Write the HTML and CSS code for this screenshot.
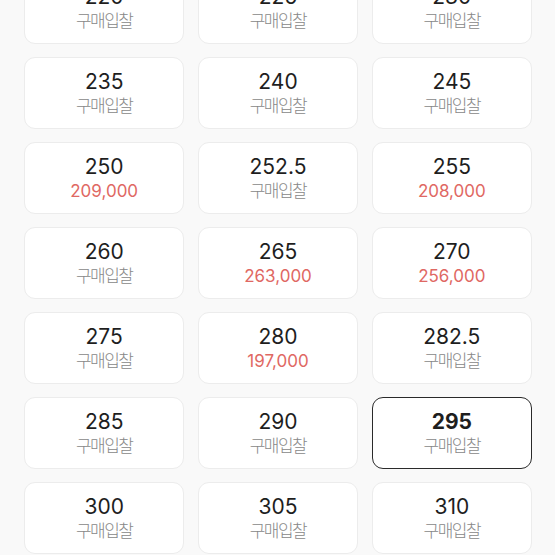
FILE: index.html
```html
<!DOCTYPE html>
<html>
  <head>
    <title>사이즈 선택</title>
    <link rel="stylesheet" href="styles.css">
  </head>

  <body>
    <div class="size-grid">
      <div class="size-card"><div class="size">220</div><div class="price">구매입찰</div></div>
      <div class="size-card"><div class="size">225</div><div class="price">구매입찰</div></div>
      <div class="size-card"><div class="size">230</div><div class="price">구매입찰</div></div>

      <div class="size-card"><div class="size">235</div><div class="price">구매입찰</div></div>
      <div class="size-card"><div class="size">240</div><div class="price">구매입찰</div></div>
      <div class="size-card"><div class="size">245</div><div class="price">구매입찰</div></div>

      <div class="size-card"><div class="size">250</div><div class="price has-bid">209,000</div></div>
      <div class="size-card"><div class="size">252.5</div><div class="price">구매입찰</div></div>
      <div class="size-card"><div class="size">255</div><div class="price has-bid">208,000</div></div>

      <div class="size-card"><div class="size">260</div><div class="price">구매입찰</div></div>
      <div class="size-card"><div class="size">265</div><div class="price has-bid">263,000</div></div>
      <div class="size-card"><div class="size">270</div><div class="price has-bid">256,000</div></div>

      <div class="size-card"><div class="size">275</div><div class="price">구매입찰</div></div>
      <div class="size-card"><div class="size">280</div><div class="price has-bid">197,000</div></div>
      <div class="size-card"><div class="size">282.5</div><div class="price">구매입찰</div></div>

      <div class="size-card"><div class="size">285</div><div class="price">구매입찰</div></div>
      <div class="size-card"><div class="size">290</div><div class="price">구매입찰</div></div>
      <div class="size-card selected"><div class="size">295</div><div class="price">구매입찰</div></div>

      <div class="size-card"><div class="size">300</div><div class="price">구매입찰</div></div>
      <div class="size-card"><div class="size">305</div><div class="price">구매입찰</div></div>
      <div class="size-card"><div class="size">310</div><div class="price">구매입찰</div></div>
    </div>
  </body>
</html>
```

FILE: styles.css
```css
body {
  margin: 0;
  background-color: #f9f9f9;
  font-family: Inter, "Noto Sans CJK KR", sans-serif;
  overflow: hidden;
}

/* list is scrolled a bit, first row cut off at the top */
.size-grid {
  display: grid;
  grid-template-columns: repeat(3, 1fr);
  column-gap: 13.5px;
  row-gap: 13.5px;
  padding: 0 23px 0 24px;
  margin-top: -28px;
}

.size-card {
  height: 71.5px;
  box-sizing: border-box;
  padding-top: 11px;
  display: flex;
  flex-direction: column;
  align-items: center;
  background-color: white;
  border: 1px solid #ececec;
  border-radius: 11px;
}

.size {
  font-size: 21px;
  line-height: 25px;
  color: #1e1e1e;
}

.price {
  margin-top: 1px;
  font-size: 17px;
  font-weight: 300;
  line-height: 22px;
  color: #888888;
  letter-spacing: -1.5px;
}

.price.has-bid {
  margin-top: 2px;
  font-weight: normal;
  line-height: 21px;
  color: #df6863;
  letter-spacing: 0;
}

.size-card.selected {
  padding-top: 10.5px;
  border: 1.5px solid #2a2a2a;
}

.size-card.selected .size {
  font-weight: bold;
}
```
